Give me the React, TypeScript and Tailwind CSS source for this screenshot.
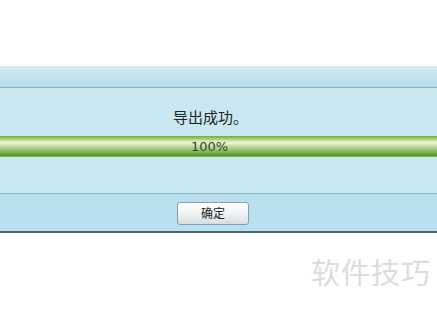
import React from 'react';

const cjk = "font-['SimSun','Noto_Sans_CJK_SC',sans-serif]";

export default function App() {
  return (
    <div className="w-[437px] h-[310px] bg-white flex flex-col overflow-hidden font-['Noto_Sans_CJK_SC',sans-serif]">
      <div className="h-[66px] shrink-0" />
      <div className="flex flex-col border-b-2 border-[#4d6575]">
        <div className="h-[22px] bg-gradient-to-b from-[#dcecf1] via-[#c2e3ee] to-[#b6dfec] border-b border-[#8fb2c2]" />
        <div className="h-[105px] bg-[#cae8f2] flex flex-col">
          <div className="h-[48px] flex items-start justify-center pt-[20px] pr-[16px]">
            <span className={`${cjk} text-[15px] leading-[18px] text-[#222]`}>导出成功。</span>
          </div>
          <div className="h-[21px] bg-gradient-to-b from-[#86b83e] via-[#eef8d4] via-30% to-[#4f9410] flex items-center justify-center border-y border-[#7fb23a] pr-[18px]">
            <span className="font-['DejaVu_Sans',sans-serif] text-[13px] text-[#34431f] leading-none">100%</span>
          </div>
        </div>
        <div className="h-[38px] bg-[#b9e0ef] border-t border-[#93b6c6] flex items-center justify-center pr-[11px]">
          <button className={`w-[72px] h-[23px] mt-[1px] rounded-[3px] border border-[#8a9ea9] bg-gradient-to-b from-[#ffffff] via-[#f1f3f4] to-[#d6dde1] ${cjk} text-[12px] text-[#222] leading-none`}>
            确定
          </button>
        </div>
      </div>
      <div className="flex-1 flex justify-end items-start pr-[6px] pt-[24px]">
        <span className="font-['Noto_Sans_CJK_SC',sans-serif] text-[29px] leading-none tracking-[1px] text-[#dcdcdc]">软件技巧</span>
      </div>
    </div>
  );
}
